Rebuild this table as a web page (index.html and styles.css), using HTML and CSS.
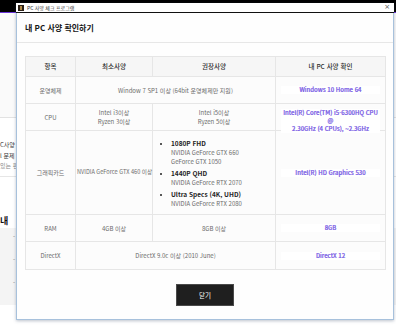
FILE: index.html
```html
<!DOCTYPE html>
<html lang="ko">
<head>
<meta charset="utf-8">
<title>PC 사양 체크 프로그램</title>
<link rel="stylesheet" href="styles.css">
</head>
<body>
<div class="site">
  <header class="site-header"></header>
  <main class="site-main">
    <section class="band band-top"></section>
    <section class="band band-text">
      <p class="frag">C사양 정보</p>
      <p class="frag">l 문제</p>
      <p class="frag frag-light">있는 편</p>
    </section>
    <section class="band band-title">
      <h2 class="frag-title">내</h2>
    </section>
    <section class="band band-grey">
      <p class="mark">- 안내</p>
      <p class="mark">- 안내</p>
      <p class="mark">- 안내</p>
    </section>
  </main>
</div>

<div class="modal">
  <div class="titlebar">
    <span class="app-icon"><span class="app-icon-inner"></span></span>
    <span class="app-title">PC 사양 체크 프로그램</span>
    <span class="close-x">×</span>
  </div>
  <div class="modal-head">
    <h1 class="modal-title">내 PC 사양 확인하기</h1>
  </div>
  <div class="modal-body">
    <table class="spec">
      <colgroup>
        <col class="c1"><col class="c2"><col class="c3"><col class="c4">
      </colgroup>
      <thead>
        <tr class="r-head">
          <th>항목</th>
          <th>최소사양</th>
          <th>권장사양</th>
          <th>내 PC 사양 확인</th>
        </tr>
      </thead>
      <tbody>
        <tr class="r-std">
          <td class="label">운영체제</td>
          <td colspan="2">Window 7 SP1 이상 (64bit 운영체제만 지원)</td>
          <td class="mine"><div class="val">Windows 10 Home 64</div></td>
        </tr>
        <tr class="r-std">
          <td class="label">CPU</td>
          <td>Intel i3이상<br>Ryzen 3이상</td>
          <td>Intel i5이상<br>Ryzen 5이상</td>
          <td class="mine"><div class="val-box"><div class="val val-multi">Intel(R) Core(TM) i5-6300HQ CPU<br>@<br>2.30GHz (4 CPUs), ~2.3GHz</div></div></td>
        </tr>
        <tr class="r-gpu">
          <td class="label">그래픽카드</td>
          <td class="tight">NVIDIA GeForce GTX 460 이상</td>
          <td class="list-cell">
            <ul class="tiers">
              <li><strong>1080P FHD</strong><span>NVIDIA GeForce GTX 660</span><span>GeForce GTX 1050</span></li>
              <li><strong>1440P QHD</strong><span>NVIDIA GeForce RTX 2070</span></li>
              <li><strong>Ultra Specs (4K, UHD)</strong><span>NVIDIA GeForce RTX 2080</span></li>
            </ul>
          </td>
          <td class="mine"><div class="val">Intel(R) HD Graphics 530</div></td>
        </tr>
        <tr class="r-std">
          <td class="label">RAM</td>
          <td>4GB 이상</td>
          <td>8GB 이상</td>
          <td class="mine"><div class="val">8GB</div></td>
        </tr>
        <tr class="r-last">
          <td class="label">DirectX</td>
          <td colspan="2">DirectX 9.0c 이상 (2010 June)</td>
          <td class="mine"><div class="val">DirectX 12</div></td>
        </tr>
      </tbody>
    </table>
    <div class="actions">
      <button class="btn-close" type="button">닫기</button>
    </div>
  </div>
</div>
</body>
</html>
```

FILE: styles.css
```css
html, body {
  margin: 0;
  padding: 0;
}

body {
  width: 396px;
  height: 328px;
  overflow: hidden;
  position: relative;
  background: #ffffff;
  font-family: "Noto Sans CJK KR", "Noto Sans", sans-serif;
}

/* ---------- background site ---------- */
.site-header {
  height: 12px;
  background: #000000;
  border-bottom: 1px solid #6a35d8;
}

.site-main {
  display: flex;
  flex-direction: column;
}

.band {
  box-sizing: border-box;
}

.band-top {
  height: 105px;
  background: #fafafa;
  border-bottom: 1px solid #e2e2e2;
}

.band-text {
  height: 59px;
  background: #ffffff;
  border-bottom: 1px solid #e6e6e6;
  padding-top: 22px;
}

.frag {
  margin: 0;
  font-size: 6px;
  line-height: 10.5px;
  color: #333333;
  white-space: nowrap;
}

.frag-light {
  color: #888888;
}

.band-title {
  height: 51px;
  background: #ffffff;
  padding-top: 38px;
}

.frag-title {
  margin: 0;
  font-size: 9px;
  line-height: 12px;
  font-weight: 700;
  color: #111111;
  white-space: nowrap;
}

.band-grey {
  height: 77px;
  background: #f4f4f4;
  padding-top: 5px;
}

.mark {
  margin: 0 0 15px;
  padding-left: 13px;
  font-size: 6px;
  line-height: 8px;
  color: #777777;
  white-space: nowrap;
}

/* ---------- modal window ---------- */
.modal {
  position: absolute;
  left: 16px;
  top: 3px;
  width: 378px;
  height: 317px;
  box-sizing: border-box;
  background: #fefefe;
  border: 1px solid #a7c1dc;
  border-top: none;
  box-shadow: 0 1px 3px rgba(60, 80, 110, 0.35);
  display: flex;
  flex-direction: column;
}

.titlebar {
  height: 9px;
  margin: 0 -1px;
  background: #ffffff;
  border-bottom: 1.5px solid #111111;
  display: flex;
  align-items: center;
  padding: 0 4px 0 2px;
}

.app-icon {
  width: 6px;
  height: 6px;
  background: #2b2016;
  display: flex;
  align-items: center;
  justify-content: center;
  margin-right: 3px;
}

.app-icon-inner {
  width: 2px;
  height: 4px;
  background: #b08a4a;
}

.app-title {
  font-size: 5px;
  line-height: 9px;
  color: #333333;
  flex: 1;
  white-space: nowrap;
}

.close-x {
  font-family: "DejaVu Sans", sans-serif;
  font-size: 7px;
  line-height: 9px;
  color: #555555;
}

.modal-head {
  height: 29px;
  border-bottom: 1px solid #e7e7e7;
  display: flex;
  align-items: center;
  padding-left: 8px;
}

.modal-title {
  margin: 0;
  font-size: 8px;
  line-height: 10px;
  font-weight: 700;
  color: #161616;
}

.modal-body {
  padding: 13px 8px 0;
}

/* ---------- spec table ---------- */
.spec {
  width: 360px;
  table-layout: fixed;
  border-collapse: collapse;
  font-size: 6px;
  color: #6b6b6b;
  text-align: center;
}

.c1 { width: 50px; }
.c2 { width: 77px; }
.c3 { width: 123px; }
.c4 { width: 110px; }

.spec th,
.spec td {
  border: 1px solid #e6e6e6;
  padding: 0 3px;
  vertical-align: middle;
  background: #fcfcfc;
  line-height: 9px;
}

.spec th {
  background: #f6f6f6;
  color: #2e2e2e;
  font-weight: 500;
  font-size: 6.5px;
}

.r-head { height: 20px; }
.r-std { height: 27px; }
.r-gpu { height: 83px; }
.r-last { height: 28px; }

.spec td.tight {
  padding: 0 1px;
  white-space: nowrap;
  font-size: 5.6px;
}

.spec td.list-cell {
  text-align: left;
  padding: 7px 4px 6px 0;
}

.tiers {
  margin: 0;
  padding: 0 0 0 18px;
  list-style: disc;
  color: #222222;
}

.tiers li + li {
  margin-top: 2px;
}

.tiers strong {
  display: block;
  font-size: 6.5px;
  line-height: 10px;
  font-weight: 700;
  color: #1e1e1e;
}

.tiers span {
  display: block;
  line-height: 9px;
  color: #6b6b6b;
}

.spec td.mine {
  padding: 0 5px;
}

.val {
  position: relative;
  z-index: 1;
  background: #ffffff;
  color: #7658e4;
  font-weight: 500;
  -webkit-text-stroke: 0.2px #7658e4;
  line-height: 8px;
}

.val-box {
  height: 16px;
}

/* ---------- actions ---------- */
.actions {
  display: flex;
  justify-content: center;
  padding-top: 14px;
}

.btn-close {
  width: 58px;
  height: 22px;
  padding: 0;
  background: #1f1f1f;
  border: 1px solid #4a4a4a;
  color: #ffffff;
  font-family: "Noto Sans CJK KR", "Noto Sans", sans-serif;
  font-size: 6.5px;
  cursor: pointer;
}
```
